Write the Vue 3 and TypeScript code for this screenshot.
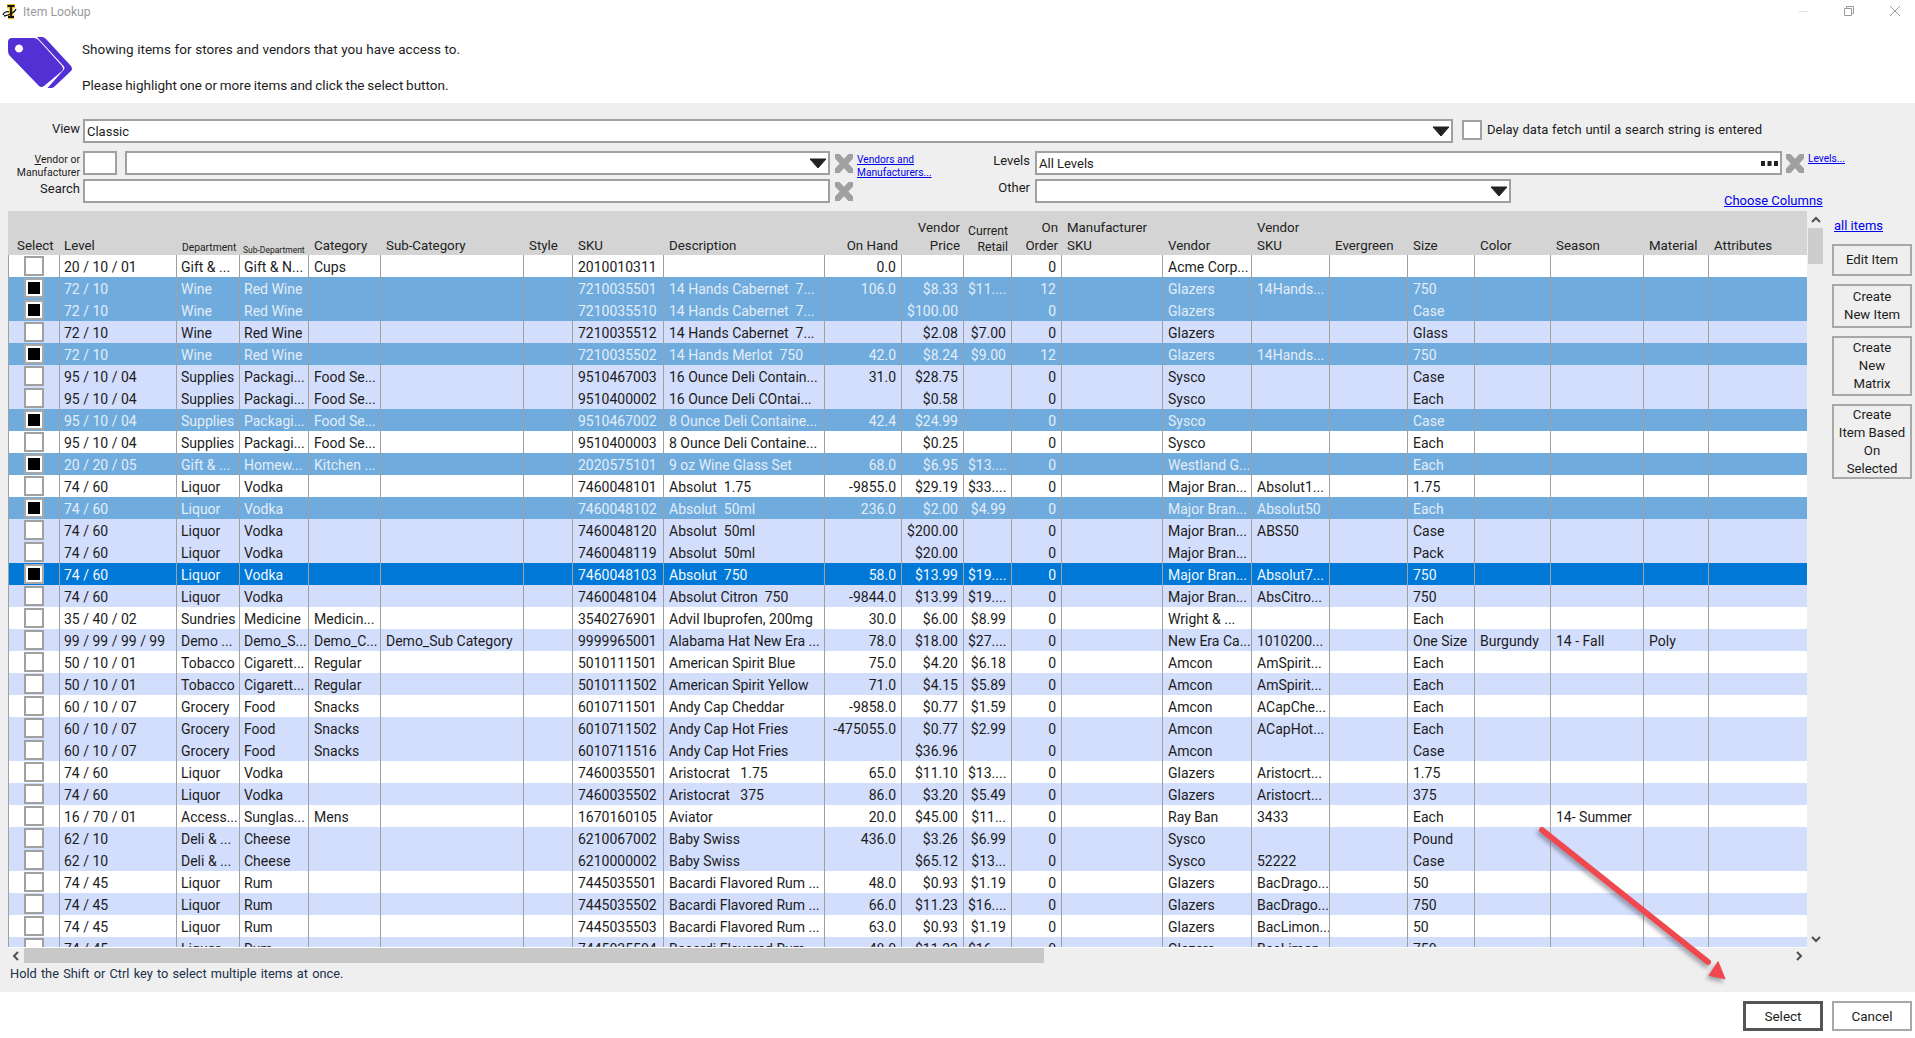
<script setup lang="ts">
interface Column { label: string; cls: string }

const columns: Column[] = [
  { label: 'Select', cls: 'c-select' },
  { label: 'Level', cls: '' },
  { label: 'Department', cls: 'h-small' },
  { label: 'Sub-Department', cls: 'h-tiny' },
  { label: 'Category', cls: '' },
  { label: 'Sub-Category', cls: '' },
  { label: 'Style', cls: '' },
  { label: 'SKU', cls: '' },
  { label: 'Description', cls: '' },
  { label: 'On Hand', cls: 'num' },
  { label: 'Vendor\nPrice', cls: 'num' },
  { label: 'Current\nRetail', cls: 'num h-mid' },
  { label: 'On\nOrder', cls: 'num' },
  { label: 'Manufacturer\nSKU', cls: '' },
  { label: 'Vendor', cls: '' },
  { label: 'Vendor\nSKU', cls: '' },
  { label: 'Evergreen', cls: '' },
  { label: 'Size', cls: '' },
  { label: 'Color', cls: '' },
  { label: 'Season', cls: '' },
  { label: 'Material', cls: '' },
  { label: 'Attributes', cls: '' },
]

const raw: string[] = [
  'w|20 / 10 / 01|Gift & ...|Gift & N...|Cups|||2010010311||0.0||   |0||Acme Corp...',
  's|72 / 10|Wine|Red Wine||||7210035501|14 Hands Cabernet  7...|106.0|$8.33|$11....|12||Glazers|14Hands...||750',
  's|72 / 10|Wine|Red Wine||||7210035510|14 Hands Cabernet  7...||$100.00||0||Glazers|||Case',
  'a|72 / 10|Wine|Red Wine||||7210035512|14 Hands Cabernet  7...||$2.08|$7.00|0||Glazers|||Glass',
  's|72 / 10|Wine|Red Wine||||7210035502|14 Hands Merlot  750|42.0|$8.24|$9.00|12||Glazers|14Hands...||750',
  'a|95 / 10 / 04|Supplies|Packagi...|Food Se...|||9510467003|16 Ounce Deli Contain...|31.0|$28.75||0||Sysco|||Case',
  'a|95 / 10 / 04|Supplies|Packagi...|Food Se...|||9510400002|16 Ounce Deli COntai...||$0.58||0||Sysco|||Each',
  's|95 / 10 / 04|Supplies|Packagi...|Food Se...|||9510467002|8 Ounce Deli Containe...|42.4|$24.99||0||Sysco|||Case',
  'w|95 / 10 / 04|Supplies|Packagi...|Food Se...|||9510400003|8 Ounce Deli Containe...||$0.25||0||Sysco|||Each',
  's|20 / 20 / 05|Gift & ...|Homew...|Kitchen ...|||2020575101|9 oz Wine Glass Set|68.0|$6.95|$13....|0||Westland G...|||Each',
  'w|74 / 60|Liquor|Vodka||||7460048101|Absolut  1.75|-9855.0|$29.19|$33....|0||Major Bran...|Absolut1...||1.75',
  's|74 / 60|Liquor|Vodka||||7460048102|Absolut  50ml|236.0|$2.00|$4.99|0||Major Bran...|Absolut50||Each',
  'a|74 / 60|Liquor|Vodka||||7460048120|Absolut  50ml||$200.00||0||Major Bran...|ABS50||Case',
  'a|74 / 60|Liquor|Vodka||||7460048119|Absolut  50ml||$20.00||0||Major Bran...|||Pack',
  'f|74 / 60|Liquor|Vodka||||7460048103|Absolut  750|58.0|$13.99|$19....|0||Major Bran...|Absolut7...||750',
  'a|74 / 60|Liquor|Vodka||||7460048104|Absolut Citron  750|-9844.0|$13.99|$19....|0||Major Bran...|AbsCitro...||750',
  'w|35 / 40 / 02|Sundries|Medicine|Medicin...|||3540276901|Advil Ibuprofen, 200mg|30.0|$6.00|$8.99|0||Wright & ...|||Each',
  'a|99 / 99 / 99 / 99|Demo ...|Demo_S...|Demo_C...|Demo_Sub Category||9999965001|Alabama Hat New Era ...|78.0|$18.00|$27....|0||New Era Ca...|1010200...||One Size|Burgundy|14 - Fall|Poly',
  'w|50 / 10 / 01|Tobacco|Cigarett...|Regular|||5010111501|American Spirit Blue|75.0|$4.20|$6.18|0||Amcon|AmSpirit...||Each',
  'a|50 / 10 / 01|Tobacco|Cigarett...|Regular|||5010111502|American Spirit Yellow|71.0|$4.15|$5.89|0||Amcon|AmSpirit...||Each',
  'w|60 / 10 / 07|Grocery|Food|Snacks|||6010711501|Andy Cap Cheddar|-9858.0|$0.77|$1.59|0||Amcon|ACapChe...||Each',
  'a|60 / 10 / 07|Grocery|Food|Snacks|||6010711502|Andy Cap Hot Fries|-475055.0|$0.77|$2.99|0||Amcon|ACapHot...||Each',
  'a|60 / 10 / 07|Grocery|Food|Snacks|||6010711516|Andy Cap Hot Fries||$36.96||0||Amcon|||Case',
  'w|74 / 60|Liquor|Vodka||||7460035501|Aristocrat   1.75|65.0|$11.10|$13....|0||Glazers|Aristocrt...||1.75',
  'a|74 / 60|Liquor|Vodka||||7460035502|Aristocrat   375|86.0|$3.20|$5.49|0||Glazers|Aristocrt...||375',
  'w|16 / 70 / 01|Access...|Sunglas...|Mens|||1670160105|Aviator|20.0|$45.00|$11...|0||Ray Ban|3433||Each||14- Summer',
  'a|62 / 10|Deli & ...|Cheese||||6210067002|Baby Swiss|436.0|$3.26|$6.99|0||Sysco|||Pound',
  'a|62 / 10|Deli & ...|Cheese||||6210000002|Baby Swiss||$65.12|$13...|0||Sysco|52222||Case',
  'w|74 / 45|Liquor|Rum||||7445035501|Bacardi Flavored Rum ...|48.0|$0.93|$1.19|0||Glazers|BacDrago...||50',
  'a|74 / 45|Liquor|Rum||||7445035502|Bacardi Flavored Rum ...|66.0|$11.23|$16....|0||Glazers|BacDrago...||750',
  'w|74 / 45|Liquor|Rum||||7445035503|Bacardi Flavored Rum ...|63.0|$0.93|$1.19|0||Glazers|BacLimon...||50',
  'a|74 / 45|Liquor|Rum||||7445035504|Bacardi Flavored Rum ...|48.0|$11.23|$16....|0||Glazers|BacLimon...||750',
]

const rows = raw.map((line) => {
  const [kind, ...rest] = line.split('|')
  const cells: string[] = []
  for (let i = 0; i < columns.length - 1; i++) cells.push((rest[i] ?? '').trim() === '' ? '' : rest[i])
  return { kind, checked: kind === 's' || kind === 'f', cells }
})

function cellClass(i: number): string {
  if (columns[i + 1].cls.includes('num')) return 'num'
  return i >= 3 ? 'wide-pad' : ''
}
</script>

<template>
  <div class="app">
    <div class="titlebar">
      <svg class="logo" viewBox="0 0 16 16" width="16" height="16">
        <path d="M5 2h8M9 2v11M6 13h6" fill="none" stroke="#f0c020" stroke-width="4.500" />
        <path d="M5.500 2h7M9 2v11M6 13h6" fill="none" stroke="#111" stroke-width="1.800" />
        <path d="M1 11c1-3 4-4 6-3M14 5c-1 3-6 6-12 7" fill="none" stroke="#111" stroke-width="1.300" />
      </svg>
      <span class="title">Item Lookup</span>
      <div class="winbtns">
        <svg width="12" height="12" viewBox="0 0 12 12"><path d="M1 6.500h10" stroke="#e4e4e4" fill="none" /></svg>
        <svg width="12" height="12" viewBox="0 0 12 12"><path d="M3.500 3V1.500h7v7H9M1.500 3.500h7v7h-7z" stroke="#9a9a9a" fill="none" /></svg>
        <svg width="12" height="12" viewBox="0 0 12 12"><path d="M1 1l10 10M11 1L1 11" stroke="#9a9a9a" fill="none" /></svg>
      </div>
    </div>

    <header class="intro">
      <svg class="tag" viewBox="0 0 66 54" width="66" height="54">
        <path
          d="M4 2H26Q29 2 31 4.500L54 30Q56 33 54 35L36 50Q33.500 52 31 50L2 20Q0 18 0 15V6Q0 2 4 2Z M11 8.500a4 4 0 1 0 0.010 0Z"
          fill="#5230d4"
          fill-rule="evenodd"
        />
        <path
          d="M29 1H34Q36 1 38 3L63 30Q65 33 63 35L46 51Q45 52 43 52H39.500L56 33.500Q57 32 56 30.500Z"
          fill="#5230d4"
        />
      </svg>
      <div class="intro-text">
        <p class="line-1">Showing items for stores and vendors that you have access to.</p>
        <p class="line-2">Please highlight one or more items and click the select button.</p>
      </div>
    </header>

    <section class="panel">
      <div class="frow frow-1">
        <label class="lbl">View</label>
        <div class="box box-view">
          <span>Classic</span>
          <svg class="tri" viewBox="0 0 18 11" width="18" height="11"><path d="M1 1h16L9 10z" fill="#222" stroke="#222" stroke-linejoin="round" /></svg>
        </div>
        <span class="check delay"></span>
        <span class="delay-text">Delay data fetch until a search string is entered</span>
      </div>

      <div class="frow frow-2">
        <label class="lbl lbl-small"><span><u>V</u>endor or</span><span>Manufacturer</span></label>
        <div class="box box-code"></div>
        <div class="box box-vendor">
          <span></span>
          <svg class="tri" viewBox="0 0 18 11" width="18" height="11"><path d="M1 1h16L9 10z" fill="#222" stroke="#222" stroke-linejoin="round" /></svg>
        </div>
        <svg class="x" viewBox="0 0 18 19" width="18" height="19"><path d="M2 2l14 15M16 2L2 17" stroke="#a0a0a0" stroke-width="6.500" stroke-linecap="square" fill="none" /></svg>
        <a class="link link-small link-vendors"><span>Vendors and</span><span>Manufacturers...</span></a>
        <label class="lbl lbl-right">Levels</label>
        <div class="box box-levels">
          <span>All Levels</span>
          <svg class="dots" viewBox="0 0 17 5" width="17" height="5"><path d="M0 0h4v5H0zM6.500 0h4v5h-4zM13 0h4v5h-4z" fill="#222" /></svg>
        </div>
        <svg class="x x-levels" viewBox="0 0 18 19" width="18" height="19"><path d="M2 2l14 15M16 2L2 17" stroke="#a0a0a0" stroke-width="6.500" stroke-linecap="square" fill="none" /></svg>
        <a class="link link-small link-levels">Levels...</a>
      </div>

      <div class="frow frow-3">
        <label class="lbl">Search</label>
        <div class="box box-search"></div>
        <svg class="x" viewBox="0 0 18 19" width="18" height="19"><path d="M2 2l14 15M16 2L2 17" stroke="#a0a0a0" stroke-width="6.500" stroke-linecap="square" fill="none" /></svg>
        <label class="lbl lbl-other">Other</label>
        <div class="box box-other">
          <span></span>
          <svg class="tri" viewBox="0 0 18 11" width="18" height="11"><path d="M1 1h16L9 10z" fill="#222" stroke="#222" stroke-linejoin="round" /></svg>
        </div>
        <a class="link link-columns">Choose Columns</a>
      </div>

      <div class="main">
        <div class="grid-wrap">
          <div class="grid">
            <div class="head cols">
              <div v-for="(c, ci) in columns" :key="c.label" class="hcell" :class="[c.cls, ci >= 4 && !c.cls ? 'wide-pad' : '']">{{ c.label }}</div>
            </div>
            <div v-for="(r, ri) in rows" :key="ri" class="row cols" :class="'k-' + r.kind">
              <div class="cell c-check">
                <span class="check" :class="{ on: r.checked }"><i v-if="r.checked"></i></span>
              </div>
              <div v-for="(v, i) in r.cells" :key="i" class="cell" :class="cellClass(i)">{{ v }}</div>
            </div>
          </div>
          <div class="hscroll">
            <svg width="8" height="10" viewBox="0 0 8 10" class="chev-l"><path d="M6 1L2 5l4 4" fill="none" stroke="#505050" stroke-width="2" /></svg>
            <div class="hthumb"></div>
            <svg width="8" height="10" viewBox="0 0 8 10" class="chev-r"><path d="M2 1l4 4-4 4" fill="none" stroke="#505050" stroke-width="2" /></svg>
          </div>
        </div>

        <div class="vscroll">
          <svg width="10" height="8" viewBox="0 0 10 8"><path d="M1 6l4-4 4 4" fill="none" stroke="#505050" stroke-width="2" /></svg>
          <div class="vthumb"></div>
          <svg class="chev-d" width="10" height="8" viewBox="0 0 10 8"><path d="M1 2l4 4 4-4" fill="none" stroke="#505050" stroke-width="2" /></svg>
        </div>

        <aside class="side">
          <a class="link link-all">all items</a>
          <button class="btn b-edit">Edit Item</button>
          <button class="btn b-new">Create<br />New Item</button>
          <button class="btn b-matrix">Create<br />New<br />Matrix</button>
          <button class="btn b-based">Create<br />Item Based<br />On<br />Selected</button>
        </aside>
      </div>

      <div class="hint">Hold the Shift or Ctrl key to select multiple items at once.</div>
    </section>

    <footer class="footer">
      <button class="btn fbtn primary">Select</button>
      <button class="btn fbtn">Cancel</button>
    </footer>

    <svg class="arrow" viewBox="0 0 200 170" width="200" height="170">
      <path d="M12 11L178 143" stroke="#f0484e" stroke-width="6" stroke-linecap="round" fill="none" />
      <path d="M194 159L180 156L188 144Z" fill="#f0484e" stroke="#f0484e" stroke-width="2" />
    </svg>
  </div>
</template>

<style scoped>
.app {
  position: relative;
  width: 1915px;
  height: 1038px;
  overflow: hidden;
  background: #fff;
  color: #1c1c1c;
  font-family: Roboto, "Liberation Sans", sans-serif;
  font-size: 14px;
}
.titlebar {
  height: 25px;
  display: flex;
  align-items: center;
  padding-left: 2px;
  padding-bottom: 1px;
  box-sizing: border-box;
}
.logo {
  margin-bottom: 1px;
}
.title {
  margin-left: 5px;
  font-size: 12.200px;
  color: #9a9a9a;
}
.winbtns {
  margin-left: auto;
  display: flex;
  gap: 34px;
  padding-right: 14px;
  padding-bottom: 3px;
}
.intro {
  height: 78px;
  display: flex;
  padding-left: 8px;
}
.tag {
  margin-top: 11px;
  flex: none;
}
.intro-text {
  margin-left: 8px;
  padding-top: 15px;
  display: flex;
  flex-direction: column;
  gap: 18px;
  font-size: 13.500px;
}
.intro-text p {
  margin: 0;
  line-height: 18px;
}
.line-1 {
  word-spacing: 0.300px;
}
.line-2 {
  word-spacing: -0.600px;
}
.panel {
  height: 889px;
  background: #efefef;
  padding-top: 16px;
  box-sizing: border-box;
}
.frow {
  display: flex;
  height: 24px;
  align-items: flex-start;
}
.frow-1 .lbl {
  padding-top: 1px;
}
.frow-2 {
  margin-top: 8px;
}
.frow-3 {
  margin-top: 4px;
}
.lbl {
  width: 80px;
  margin-right: 3px;
  flex: none;
  text-align: right;
  font-size: 13px;
  line-height: 18px;
  padding-top: 0;
}
.lbl-small {
  display: flex;
  flex-direction: column;
  font-size: 10.500px;
  line-height: 13px;
  margin-top: 2px;
}
.frow-3 .lbl {
  padding-top: 1px;
}
.box {
  height: 24px;
  box-sizing: border-box;
  border: 2px solid #a0a0a0;
  background: #fff;
  display: flex;
  align-items: center;
  justify-content: space-between;
  padding: 1px 1px 0 2px;
  flex: none;
  font-size: 13px;
}
.box-view {
  width: 1370px;
}
.box-code {
  width: 34px;
}
.box-vendor {
  width: 705px;
  margin-left: 8px;
}
.box-search {
  width: 747px;
}
.box-levels {
  width: 747px;
  margin-left: 5px;
}
.box-other {
  width: 476px;
  margin-left: 5px;
}
.tri {
  margin-bottom: 1px;
}
.dots {
  margin-bottom: 1px;
  margin-right: 1px;
}
.check {
  display: block;
  box-sizing: border-box;
  width: 20px;
  height: 20px;
  border: 2px solid #a0a0a0;
  background: #fff;
  padding: 2px;
}
.check i {
  display: block;
  width: 100%;
  height: 100%;
  background: #000;
}
.delay {
  margin-left: 9px;
  margin-top: 1px;
  flex: none;
}
.delay-text {
  margin-left: 5px;
  font-size: 13px;
  line-height: 18px;
  word-spacing: 0.600px;
  margin-top: 2px;
}
.x {
  margin-left: 5px;
  margin-top: 3px;
  flex: none;
}
.x-levels {
  margin-left: 4px;
}
.link {
  color: #0000ee;
  text-decoration: underline;
}
.link-small {
  font-size: 10.200px;
  line-height: 13px;
}
.link-vendors {
  display: flex;
  flex-direction: column;
  width: 110px;
  margin-left: 4px;
  margin-top: 2px;
  flex: none;
}
.link-levels {
  margin-left: 4px;
  margin-top: 1px;
}
.lbl-right {
  width: 63px;
  margin-right: 0;
  margin-top: 1px;
}
.lbl-other {
  width: 177px;
  margin-right: 0;
}
.frow-3 .lbl-other {
  padding-top: 0;
}
.link-columns {
  margin-left: 213px;
  margin-top: 14px;
  font-size: 13px;
  line-height: 16px;
  white-space: nowrap;
}
.main {
  margin-top: 8px;
  height: 752px;
  display: flex;
  padding-left: 8px;
}
.grid-wrap {
  width: 1799px;
  flex: none;
}
.grid {
  height: 736px;
  overflow: hidden;
  border-bottom: 1px solid #fff;
}
.cols {
  display: grid;
  grid-template-columns: 52px 117px 63px 69px 72px 143px 49px 91px 161px 77px 62px 48px 50px 101px 89px 78px 78px 67px 76px 93px 65px 98px;
}
.head {
  height: 44px;
  background: #d4d4d4;
  align-items: end;
}
.hcell {
  white-space: pre-line;
  font-size: 13.300px;
  line-height: 18px;
  padding: 0 5px 0 4px;
  color: #222;
  overflow: visible;
}
.hcell.wide-pad,
.cell.wide-pad {
  padding-left: 5px;
}
.c-select {
  padding-left: 9px;
}
.hcell.num {
  text-align: right;
  padding-right: 4px;
}
.hcell.h-small {
  font-size: 10.300px;
  line-height: 14px;
  padding-left: 5px;
  white-space: nowrap;
}
.hcell.h-tiny {
  font-size: 8.500px;
  line-height: 10px;
  padding-left: 3px;
  white-space: nowrap;
}
.hcell.h-mid {
  font-size: 12.200px;
  line-height: 16px;
  padding-bottom: 0;
}
.row {
  height: 22px;
}
.cell {
  box-sizing: border-box;
  height: 22px;
  line-height: 25px;
  padding: 0 4px 0 4px;
  border-right: 1px solid #a0a0a0;
  white-space: pre;
  overflow: hidden;
  text-overflow: clip;
}
.cell:first-child {
  border-left: 1px solid #a0a0a0;
}
.cell:last-child {
  border-right: none;
}
.cell.num {
  text-align: right;
  padding-right: 5px;
}
.c-check {
  padding: 1px 0 0 15px;
}
.k-w {
  background: #fff;
}
.k-a {
  background: #d3defc;
}
.k-s {
  background: #6fabdd;
  color: #e4edf7;
}
.k-f {
  background: #0078d7;
  color: #f2f7fc;
}
.k-s .check,
.k-f .check {
  border-color: #a8a8a8;
}
.hscroll {
  height: 15px;
  display: flex;
  align-items: center;
  position: relative;
}
.chev-l {
  margin-left: 4px;
  flex: none;
}
.hthumb {
  margin-left: 4px;
  width: 1020px;
  height: 15px;
  background: #c8c8c8;
}
.chev-r {
  margin-left: auto;
  margin-right: 4px;
  flex: none;
}
.vscroll {
  width: 15px;
  margin-left: 1px;
  flex: none;
  height: 736px;
  display: flex;
  flex-direction: column;
  align-items: center;
  padding-top: 5px;
  box-sizing: border-box;
}
.vthumb {
  width: 15px;
  height: 36px;
  margin-top: 4px;
  background: #cdcdcd;
}
.chev-d {
  margin-top: auto;
  margin-bottom: 4px;
}
.side {
  margin-left: 9px;
  width: 80px;
  flex: none;
  display: flex;
  flex-direction: column;
}
.link-all {
  margin-top: 7px;
  margin-left: 2px;
  height: 26px;
  font-size: 13px;
  line-height: 16px;
}
.btn {
  display: block;
  box-sizing: border-box;
  border: 2px solid #a8a8a8;
  background: #efefef;
  color: #1c1c1c;
  font-family: inherit;
  font-size: 13.200px;
  line-height: 18px;
  padding: 0;
  text-align: center;
}
.b-edit {
  height: 32px;
  padding-bottom: 1px;
}
.b-new {
  height: 44px;
  margin-top: 8px;
}
.b-matrix {
  height: 60px;
  margin-top: 8px;
}
.b-based {
  height: 75px;
  margin-top: 8px;
}
.hint {
  padding: 2px 0 0 10px;
  line-height: 18px;
  font-size: 12.800px;
  color: #20304a;
  word-spacing: 1px;
}
.footer {
  height: 46px;
  box-sizing: border-box;
  display: flex;
  justify-content: flex-end;
  gap: 9px;
  padding: 9px 3px 0 0;
}
.fbtn {
  width: 80px;
  height: 30px;
  background: #fff;
  border: 2px solid #a8a8a8;
  font-size: 13.500px;
}
.primary {
  border: 3px solid #555;
}
.arrow {
  position: absolute;
  left: 1530px;
  top: 819px;
  filter: drop-shadow(-2px 3px 2px rgba(60, 60, 80, 0.45));
}
</style>

<style>
html,
body {
  margin: 0;
  overflow: hidden;
}
</style>
